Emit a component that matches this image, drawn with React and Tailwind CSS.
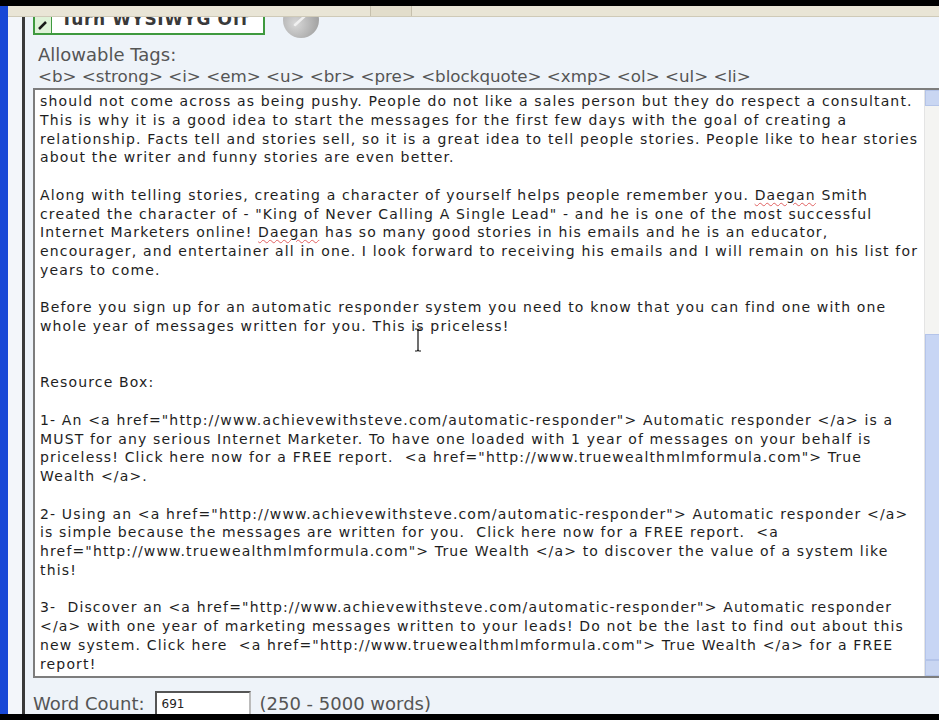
import React from "react";

const lines = [
  "should not come across as being pushy. People do not like a sales person but they do respect a consultant.",
  "This is why it is a good idea to start the messages for the first few days with the goal of creating a",
  "relationship. Facts tell and stories sell, so it is a great idea to tell people stories. People like to hear stories",
  "about the writer and funny stories are even better.",
  "",
  "Along with telling stories, creating a character of yourself helps people remember you. {Daegan} Smith",
  'created the character of - "King of Never Calling A Single Lead" - and he is one of the most successful',
  "Internet Marketers online! {Daegan} has so many good stories in his emails and he is an educator,",
  "encourager, and entertainer all in one. I look forward to receiving his emails and I will remain on his list for",
  "years to come.",
  "",
  "Before you sign up for an automatic responder system you need to know that you can find one with one",
  "whole year of messages written for you. This is priceless!",
  "",
  "",
  "Resource Box:",
  "",
  '1- An <a href="http://www.achievewithsteve.com/automatic-responder"> Automatic responder </a> is a',
  "MUST for any serious Internet Marketer. To have one loaded with 1 year of messages on your behalf is",
  'priceless! Click here now for a FREE report.  <a href="http://www.truewealthmlmformula.com"> True',
  "Wealth </a>.",
  "",
  '2- Using an <a href="http://www.achievewithsteve.com/automatic-responder"> Automatic responder </a>',
  "is simple because the messages are written for you.  Click here now for a FREE report.  <a",
  'href="http://www.truewealthmlmformula.com"> True Wealth </a> to discover the value of a system like',
  "this!",
  "",
  '3-  Discover an <a href="http://www.achievewithsteve.com/automatic-responder"> Automatic responder',
  "</a> with one year of marketing messages written to your leads! Do not be the last to find out about this",
  'new system. Click here  <a href="http://www.truewealthmlmformula.com"> True Wealth </a> for a FREE',
  "report!",
];

// words the spell checker flagged get a red wavy underline
const Line = ({ text }) => {
  const parts = text.split(/\{(.*?)\}/);
  return (
    <div className="h-[18.75px] whitespace-pre">
      {parts.map((p, i) =>
        i % 2 === 1 ? (
          <span
            key={i}
            className="underline decoration-wavy decoration-[#e06060] decoration-1 underline-offset-2"
          >
            {p}
          </span>
        ) : (
          <span key={i}>{p}</span>
        )
      )}
    </div>
  );
};

const App = () => {
  return (
    <div className="w-[939px] h-[720px] overflow-hidden bg-black flex flex-col font-['DejaVu_Sans',Verdana,sans-serif]">
      <div className="h-[6px] shrink-0 bg-black" />
      <div className="flex-1 flex min-h-0">
        {/* window frame */}
        <div className="w-[8px] shrink-0 bg-[#1848d6]" />
        <div className="flex-1 flex flex-col min-w-0">
          {/* browser toolbar edge */}
          <div className="h-[11px] shrink-0 bg-[#e9e5d6] border-b border-[#cfcab8] flex">
            <div className="w-[362px]" />
            <div className="w-[42px] border-x border-[#c6c0ad] bg-[#e2ddcb]" />
          </div>
          <div className="flex-1 flex min-h-0">
            <div className="w-[14px] shrink-0 bg-[#f3f6fa]" />
            <div className="w-[3px] shrink-0 bg-[#3a3a3a]" />
            <div className="flex-1 bg-[#eef3f9] overflow-hidden relative">
              {/* WYSIWYG toggle row */}
              <div className="flex items-start h-[22px] pl-[8px]">
                <div className="-mt-[15px] flex items-center gap-[18px]">
                  <button className="h-[30px] w-[232px] border-2 border-[#3f9a3f] bg-white flex items-center overflow-hidden">
                    <span className="w-[17px] h-full shrink-0 bg-[#dff2d8] border-r border-[#3f9a3f] flex items-end justify-center pb-[2px]">
                      <svg width="12" height="12" viewBox="0 0 12 12">
                        <path d="M2 10 L9 3" stroke="#1a1a1a" strokeWidth="2.5" />
                      </svg>
                    </span>
                    <span className="pl-[9px] text-[17px] font-bold text-[#3a3a3a] tracking-[0.6px] whitespace-nowrap">
                      Turn WYSIWYG Off
                    </span>
                  </button>
                  <div className="w-[36px] h-[36px] rounded-full bg-[radial-gradient(circle_at_35%_60%,#d8d8d8,#8e8e8e)] flex items-center justify-center">
                    <svg width="20" height="20" viewBox="0 0 20 20">
                      <path d="M4 15 L15 5" stroke="#f0f0f0" strokeWidth="2.5" strokeLinecap="round" />
                    </svg>
                  </div>
                </div>
              </div>

              <div className="pl-[13px] pt-[5px] text-[#555] font-['DejaVu_Sans',Tahoma,sans-serif]">
                <div className="text-[18px] leading-[22px]">Allowable Tags:</div>
                <div className="whitespace-pre text-[16.7px] leading-[20px]">
                  {"<b> <strong> <i> <em> <u> <br> <pre> <blockquote> <xmp> <ol> <ul> <li>"}
                </div>
              </div>

              {/* article textarea */}
              <div className="ml-[8px] mt-[2px] h-[590px] w-[910px] border-2 border-[#7d7d7d] bg-white flex">
                <div className="flex-1 pl-[5px] pt-[1px] text-[14px] tracking-[1.15px] text-[#1e1e1e] overflow-hidden">
                  {lines.map((l, i) => (
                    <Line key={i} text={l} />
                  ))}
                </div>
                {/* scrollbar */}
                <div className="w-[17px] shrink-0 flex flex-col bg-[#f4f4f2] border-l border-[#e4e4e4]">
                  <div className="h-[16px] bg-[#c9d6f2] border border-[#b4c4e8]" />
                  <div className="h-[228px]" />
                  <div className="flex-1 bg-[#c7d5f4] border border-[#b4c4ea]" />
                  <div className="h-[16px] bg-[#c9d6f2] border border-[#b4c4e8]" />
                </div>
              </div>

              {/* text cursor over the textarea */}
              <svg
                className="absolute left-[388px] top-[311px]"
                width="10"
                height="24"
                viewBox="0 0 10 24"
              >
                <path
                  d="M2 1 H4 Q5 1 5 3 V21 Q5 23 6 23 H8 M8 1 H6 Q5 1 5 3 M5 21 Q5 23 4 23 H2"
                  stroke="#111"
                  strokeWidth="1.2"
                  fill="none"
                />
              </svg>

              {/* word count */}
              <div className="flex items-center pl-[8px] mt-[12px] text-[18px] text-[#555]">
                <span>Word Count:</span>
                <div className="ml-[10px] w-[96px] h-[26px] shrink-0 border-2 border-[#555] border-r-[#bbb] border-b-[#bbb] bg-white flex items-center pl-[5px] text-[12px] text-[#222]">
                  691
                </div>
                <span className="ml-[9px]">(250 - 5000 words)</span>
              </div>
            </div>
          </div>
        </div>
      </div>
      <div className="h-[6px] shrink-0 bg-black" />
    </div>
  );
};

export default App;
